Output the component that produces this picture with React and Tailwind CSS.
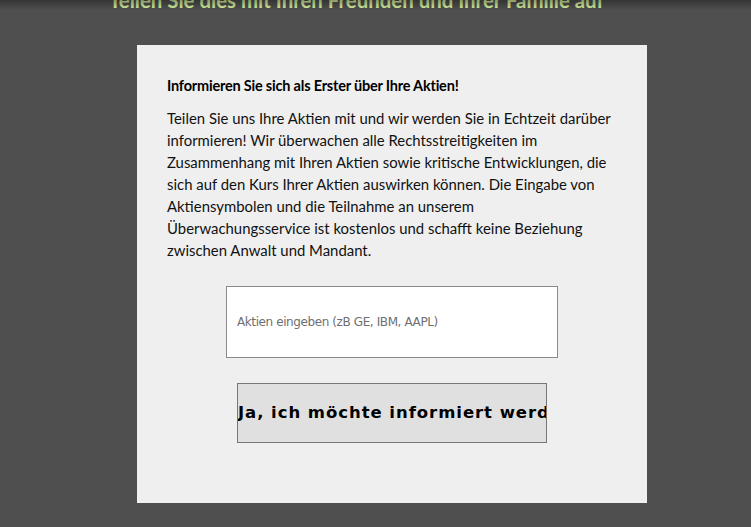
export default function App() {
  return (
    <div className="relative h-[527px] w-[751px] overflow-hidden bg-[#4f4f4f] font-['Lato',sans-serif]">
      <div className="pointer-events-none absolute inset-x-0 top-0 z-10 h-[10px] bg-gradient-to-b from-[rgba(0,0,0,0.35)] to-transparent" />
      <h2 className="-mt-[12px] pl-[109px] text-[20.4px] leading-[24px] font-bold whitespace-nowrap text-[#d4ee9c]">
        Teilen Sie dies mit Ihren Freunden und Ihrer Familie auf
      </h2>
      <div className="mt-[33px] ml-[137px] h-[458px] w-[510px] bg-[#efefef] px-[30px] pt-[31px]">
        <h3 className="text-[14.5px] leading-[20px] font-bold tracking-[-0.2px] text-black">
          Informieren Sie sich als Erster über Ihre Aktien!
        </h3>
        <p className="mt-[11px] text-[14.9px] leading-[22px] text-[#111]">
          Teilen Sie uns Ihre Aktien mit und wir werden Sie in Echtzeit darüber informieren! Wir überwachen alle
          Rechtsstreitigkeiten im Zusammenhang mit Ihren Aktien sowie kritische Entwicklungen, die sich auf den Kurs
          Ihrer Aktien auswirken können. Die Eingabe von Aktiensymbolen und die Teilnahme an unserem
          Überwachungsservice ist kostenlos und schafft keine Beziehung zwischen Anwalt und Mandant.
        </p>
        <div className="mt-[25px] flex flex-col items-start">
          <input
            type="text"
            placeholder="Aktien eingeben (zB GE, IBM, AAPL)"
            className="ml-[59px] h-[72px] w-[332px] border border-[#8a8a8a] bg-white px-[10px] font-['DejaVu_Sans',sans-serif] text-[12px] tracking-[-0.4px] text-black outline-none placeholder:text-[#6f6f6f]"
          />
          <button className="mt-[25px] ml-[70px] flex h-[60px] w-[310px] items-center overflow-hidden border border-[#777] bg-[#e0e0e0] pl-0 text-left font-['DejaVu_Sans',sans-serif] text-[16.5px] font-bold tracking-[0.95px] whitespace-nowrap text-black">
            Ja, ich möchte informiert werden
          </button>
        </div>
      </div>
    </div>
  );
}
